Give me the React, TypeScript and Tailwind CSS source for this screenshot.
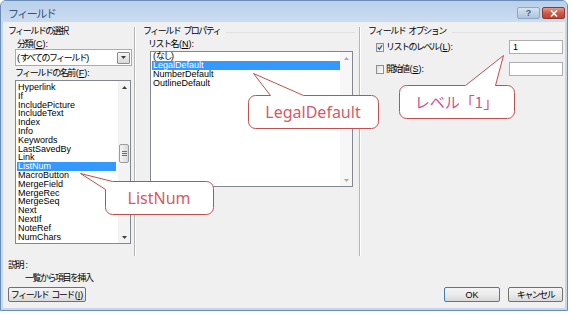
import React from "react";

const ui = "font-['Liberation_Sans','Noto_Sans_CJK_JP',sans-serif] text-[9px] leading-[10px] text-black";
const jp = "tracking-[-1.5px]";

const fields = [
  "Hyperlink",
  "If",
  "IncludePicture",
  "IncludeText",
  "Index",
  "Info",
  "Keywords",
  "LastSavedBy",
  "Link",
  "ListNum",
  "MacroButton",
  "MergeField",
  "MergeRec",
  "MergeSeq",
  "Next",
  "NextIf",
  "NoteRef",
  "NumChars",
];

const listNames = ["(なし)", "LegalDefault", "NumberDefault", "OutlineDefault"];

// Japanese text with the accelerator key, e.g. 分類(C):
function Label({ text, k, colon = true }: { text: string; k?: string; colon?: boolean }) {
  return (
    <>
      <span className={jp}>{text}</span>
      {k && (
        <>
          <span className="ml-[1px]">(</span>
          <span className="underline">{k}</span>)
        </>
      )}
      {colon && ":"}
    </>
  );
}

function Arrow({ up, color = "#3c3c3c" }: { up?: boolean; color?: string }) {
  return (
    <svg width="5" height="3" viewBox="0 0 5 3">
      <polygon points={up ? "0,3 5,3 2.5,0" : "0,0 5,0 2.5,3"} fill={color} />
    </svg>
  );
}

function CheckBox({ checked }: { checked?: boolean }) {
  return (
    <div className="w-[8px] h-[9px] border border-[#8e8f8f] bg-gradient-to-br from-[#dcdcdc] to-white flex items-center justify-center">
      {checked && (
        <svg width="7" height="7" viewBox="0 0 7 7">
          <path d="M1 3.5 L2.8 5.5 L6 1" fill="none" stroke="#2d4fa0" strokeWidth="1.4" />
        </svg>
      )}
    </div>
  );
}

function Button({ children, w, primary }: { children: React.ReactNode; w: string; primary?: boolean }) {
  return (
    <div
      className={`${w} h-[15px] rounded-[2px] border ${
        primary ? "border-[#3c7fb1]" : "border-[#707070]"
      } bg-gradient-to-b from-[#f4f4f4] via-[#ebebeb] to-[#d9d9d9] flex items-center justify-center`}
    >
      {children}
    </div>
  );
}

function Callouts() {
  return (
    <>
      <svg className="absolute left-0 top-0 pointer-events-none" width="572" height="316">
        <g fill="white" stroke="#c0504d" strokeWidth="1">
          <path d="M112.5,181.5 H206.5 A7,7 0 0 1 213.5,188.5 V207.5 A7,7 0 0 1 206.5,214.5 H112.5 A7,7 0 0 1 105.5,207.5 V189.5 L80.5,173.5 Z" />
          <path d="M255.5,95.5 H270.5 L253.5,73.5 L303.5,95.5 H371.5 A7,7 0 0 1 378.5,102.5 V121.5 A7,7 0 0 1 371.5,128.5 H255.5 A7,7 0 0 1 248.5,121.5 V102.5 A7,7 0 0 1 255.5,95.5 Z" />
          <path d="M406.5,85.5 H465.5 L503.5,55.5 L495.5,85.5 H507.5 A7,7 0 0 1 514.5,92.5 V111.5 A7,7 0 0 1 507.5,118.5 H406.5 A7,7 0 0 1 399.5,111.5 V92.5 A7,7 0 0 1 406.5,85.5 Z" />
        </g>
      </svg>
      <div className="absolute left-[105px] top-[181px] w-[108px] h-[33px] flex items-center justify-center font-['Noto_Sans','Noto_Sans_CJK_JP',sans-serif] text-[16px] text-[#d65a66]">
        ListNum
      </div>
      <div className="absolute left-[248px] top-[95px] w-[130px] h-[33px] flex items-center justify-center font-['Noto_Sans','Noto_Sans_CJK_JP',sans-serif] text-[16px] text-[#d65a66]">
        LegalDefault
      </div>
      <div className="absolute left-[399px] top-[85px] w-[115px] h-[33px] flex items-center justify-center font-['Noto_Sans_CJK_JP',sans-serif] text-[15px] text-[#d2508c]">
        レベル「1」
      </div>
    </>
  );
}

export default function App() {
  return (
    <div className={`relative w-[572px] h-[316px] bg-white overflow-hidden ${ui}`}>
      <div className="w-[568px] h-[311px] rounded-t-[6px] border border-[#6b8db5] bg-[#c4d7ed] flex flex-col">
        <header className="h-[21px] pt-[3px] flex items-center bg-gradient-to-b from-[#b9d0ea] to-[#cadcf0] rounded-t-[5px]">
          <h1 className={`pl-[7px] font-['Noto_Sans_CJK_JP',sans-serif] text-[11px] leading-[12px] text-[#34537d] ${jp}`}>
            フィールド
          </h1>
          <div className="ml-auto mr-[2px] flex gap-[2px]">
            <div className="w-[23px] h-[12px] rounded-[2px] border border-[#8ea6c2] bg-gradient-to-b from-[#d6e3f1] to-[#aec4dc] flex items-center justify-center text-[9px] leading-[9px] font-bold text-[#45607f]">
              ?
            </div>
            <div className="w-[23px] h-[12px] rounded-[2px] border border-[#8c3a31] bg-gradient-to-b from-[#e59a8c] via-[#cc5a45] to-[#c2412c] flex items-center justify-center">
              <svg width="8" height="7" viewBox="0 0 8 7">
                <path d="M1 0.5 L7 6.5 M7 0.5 L1 6.5" stroke="white" strokeWidth="1.6" />
              </svg>
            </div>
          </div>
        </header>

        <div className="mx-[2px] mb-[2px] flex-1 bg-[#f0f0f0] flex flex-col">
          <div className="h-[234px] flex pl-[5px]">
            {/* フィールドの選択 */}
            <section className="w-[126px] pt-[4px] flex flex-col">
              <div className={jp}>フィールドの選択</div>
              <div className="mt-[3px] pl-[9px]">
                <Label text="分類" k="C" />
              </div>
              <div className="ml-[7px] w-[117px] h-[17px] border border-[#a5acb5] bg-white flex items-center">
                <span className="pl-[1px]">
                  (<span className={jp}>すべてのフィールド</span>)
                </span>
                <div className="ml-auto mr-[1px] w-[13px] h-[12px] border border-[#8c8c8c] rounded-[1px] bg-gradient-to-b from-[#f6f6f6] to-[#d8d8d8] flex items-center justify-center">
                  <Arrow />
                </div>
              </div>
              <div className="mt-[2px] pl-[7px]">
                <Label text="フィールドの名前" k="F" />
              </div>
              <div className="mt-[2px] ml-[7px] w-[116px] h-[164px] border border-[#828790] bg-white flex overflow-hidden">
                <div className="flex-1 pt-[2px] pl-[1px] pr-[2px]">
                  {fields.map((f) => (
                    <div
                      key={f}
                      className={`h-[8.8px] leading-[8.8px] pl-[1px] ${
                        f === "ListNum" ? "bg-[#3399ff] text-white" : ""
                      }`}
                    >
                      {f}
                    </div>
                  ))}
                </div>
                <div className="w-[12px] bg-[#f3f3f3] flex flex-col">
                  <div className="h-[12px] flex items-center justify-center">
                    <Arrow up />
                  </div>
                  <div className="mt-[51px] mx-[1px] h-[19px] rounded-[2px] border border-[#9b9b9b] bg-gradient-to-r from-[#f4f4f4] to-[#dadada] flex flex-col items-center justify-center gap-[1px]">
                    <div className="w-[5px] h-px bg-[#6f6f6f]" />
                    <div className="w-[5px] h-px bg-[#6f6f6f]" />
                    <div className="w-[5px] h-px bg-[#6f6f6f]" />
                  </div>
                  <div className="flex-1" />
                  <div className="h-[12px] flex items-center justify-center">
                    <Arrow />
                  </div>
                </div>
              </div>
            </section>

            <div className="mt-[5px] w-[2px] border-l border-[#b4b4b4] border-r border-r-white" />

            {/* フィールド プロパティ */}
            <section className="w-[223px] pt-[4px] flex flex-col">
              <div className="flex items-center pl-[7px]">
                <span className={jp}>フィールド</span>
                <span className={`ml-[3px] ${jp}`}>プロパティ</span>
                <div className="flex-1 ml-[6px] mr-[4px] mt-[2px] h-px bg-[#e0e0e0]" />
              </div>
              <div className="mt-[3px] pl-[12px]">
                <Label text="リスト名" k="N" />
              </div>
              <div className="mt-[2px] ml-[14px] w-[203px] h-[136px] border border-[#828790] bg-white flex">
                <div className="flex-1 pl-[1px]">
                  {listNames.map((n) => (
                    <div
                      key={n}
                      className={`h-[9px] leading-[9px] pl-[1px] ${
                        n === "LegalDefault" ? "bg-[#3399ff] text-white" : ""
                      }`}
                    >
                      {n === "(なし)" ? (
                        <>
                          (<span className={jp}>なし</span>)
                        </>
                      ) : (
                        n
                      )}
                    </div>
                  ))}
                </div>
                <div className="w-[12px] bg-[#f7f7f7] flex flex-col justify-between">
                  <div className="h-[12px] flex items-center justify-center">
                    <Arrow up color="#a8a8a8" />
                  </div>
                  <div className="h-[12px] flex items-center justify-center">
                    <Arrow color="#a8a8a8" />
                  </div>
                </div>
              </div>
            </section>

            <div className="mt-[5px] w-[2px] border-l border-[#b4b4b4] border-r border-r-white" />

            {/* フィールド オプション */}
            <section className="flex-1 pt-[4px] flex flex-col">
              <div className="flex items-center pl-[7px]">
                <span className={jp}>フィールド</span>
                <span className={`ml-[3px] ${jp}`}>オプション</span>
                <div className="flex-1 ml-[6px] mr-[2px] mt-[2px] h-px bg-[#e0e0e0]" />
              </div>
              <div className="mt-[4px] h-[14px] flex items-center pl-[15px] pr-[2px]">
                <CheckBox checked />
                <span className="ml-[2px]">
                  <Label text="リストのレベル" k="L" />
                </span>
                <div className="ml-auto w-[54px] h-[14px] border border-[#abadb3] bg-white pl-[3px] flex items-center">
                  1
                </div>
              </div>
              <div className="mt-[8px] h-[14px] flex items-center pl-[15px] pr-[2px]">
                <CheckBox />
                <span className="ml-[2px]">
                  <Label text="開始値" k="S" />
                </span>
                <div className="ml-auto w-[54px] h-[14px] border border-[#abadb3] bg-white" />
              </div>
            </section>
          </div>

          <div className="mt-[4px] pl-[5px]">
            <span className={jp}>説明</span> :
          </div>
          <div className={`mt-[3px] pl-[22px] ${jp}`}>一覧から項目を挿入</div>

          <div className="mt-[4px] flex items-center pl-[5px] pr-[2px]">
            <Button w="w-[78px]">
              <span className={jp}>フィールド</span>
              <span className={`ml-[3px] ${jp}`}>コード</span>
              <span className="ml-[1px]">(</span>
              <span className="underline">I</span>)
            </Button>
            <div className="ml-auto flex gap-[8px]">
              <Button w="w-[56px]" primary>
                OK
              </Button>
              <Button w="w-[55px]">
                <span className={jp}>キャンセル</span>
              </Button>
            </div>
          </div>
        </div>
      </div>
      <Callouts />
    </div>
  );
}
